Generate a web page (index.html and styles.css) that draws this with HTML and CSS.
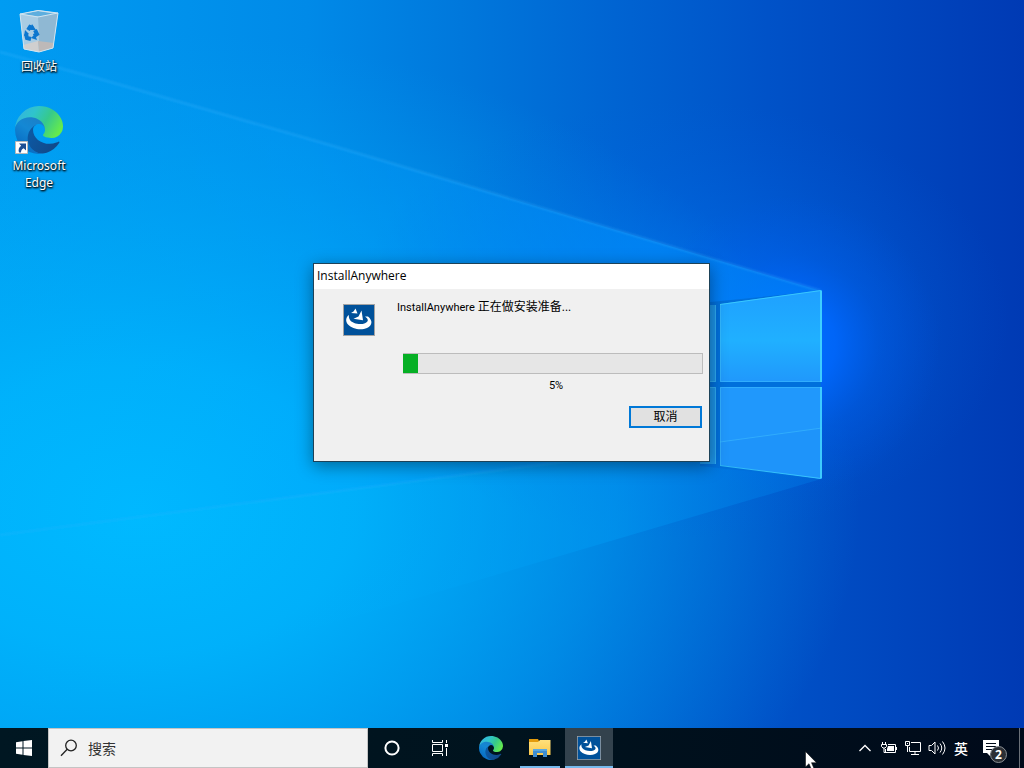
FILE: index.html
```
<!DOCTYPE html>
<html lang="zh-CN">
<head>
    <meta charset="UTF-8">
    <meta name="viewport" content="width=device-width, initial-scale=1.0">
    <title>InstallAnywhere</title>
    <link rel="stylesheet" href="styles.css">
</head>
<body>

<!-- shared icons -->
<svg class="defs" width="0" height="0" aria-hidden="true">
    <defs>
        <linearGradient id="edgeDark" x1="0.2" y1="0" x2="1" y2="0.4">
            <stop offset="0" stop-color="#0c59a4"/>
            <stop offset="1" stop-color="#114a8b"/>
        </linearGradient>
        <linearGradient id="edgeBlue" x1="0.8" y1="0.1" x2="0.3" y2="1">
            <stop offset="0" stop-color="#1b80c8"/>
            <stop offset="0.4" stop-color="#1488d4"/>
            <stop offset="1" stop-color="#0667c0"/>
        </linearGradient>
        <linearGradient id="edgeGreen" x1="0" y1="0.2" x2="1" y2="0.6">
            <stop offset="0" stop-color="#35b1e1"/>
            <stop offset="0.35" stop-color="#2fc4cc"/>
            <stop offset="0.65" stop-color="#36c98c"/>
            <stop offset="1" stop-color="#66eb4b"/>
        </linearGradient>
        <linearGradient id="folder" x1="0" y1="0" x2="0" y2="1">
            <stop offset="0" stop-color="#ffe07c"/>
            <stop offset="1" stop-color="#fbc94c"/>
        </linearGradient>
    </defs>
    <symbol id="edge" viewBox="0 0 256 256">
        <g transform="translate(-4.63 -4.92)">
            <path fill="url(#edgeDark)" d="M235.68 195.46a93.73 93.73 0 0 1-10.54 4.71 101.87 101.87 0 0 1-35.9 6.46c-47.32 0-88.54-32.55-88.54-74.32A31.48 31.48 0 0 1 117.13 105c-42.8 1.8-53.8 46.4-53.8 72.53 0 73.88 68.09 81.37 82.76 81.37 7.91 0 19.84-2.3 27-4.56l1.31-.44a128.34 128.34 0 0 0 66.6-52.8 4 4 0 0 0-5.32-5.64Z"/>
            <path fill="url(#edgeBlue)" d="M110.34 246.34A79.2 79.2 0 0 1 87.6 225a80.72 80.72 0 0 1 29.53-120c3.12-1.47 8.45-4.13 15.54-4a32.35 32.35 0 0 1 25.69 13 31.88 31.88 0 0 1 6.36 18.66c0-.21 24.46-79.6-80-79.6-43.9 0-80 41.66-80 78.21a130.15 130.15 0 0 0 12.11 56 128 128 0 0 0 156.38 67.11 75.55 75.55 0 0 1-62.78-8Z"/>
            <path fill="url(#edgeGreen)" d="M156.94 153.78c-.81 1.05-3.3 2.5-3.3 5.66 0 2.61 1.7 5.12 4.72 7.23 14.38 10 41.49 8.68 41.56 8.68a59.56 59.56 0 0 0 30.27-8.35A61.38 61.38 0 0 0 260.64 114c.26-22.41-8-37.31-11.34-43.91C228.09 28.76 182.35 4.92 132.61 4.92a128 128 0 0 0-128 126.2c.48-36.54 36.8-66.05 80-66.05 3.5 0 23.46.34 42 10.07 16.34 8.58 24.9 18.94 30.85 29.21 6.18 10.67 7.28 24.15 7.28 29.52s-2.74 13.33-7.8 19.91Z"/>
        </g>
    </symbol>
    <symbol id="installer" viewBox="0 0 32 32">
        <path fill="#a3a3a3" d="M0 0h32v32H0z"/>
        <path fill="#00519a" d="M1 1h30v30H1z"/>
        <path fill="#fff" d="M6 11C3 13 2 17 5 20.500C9 25 18 26.500 24 24C29.500 21.500 30 16.500 25 12.500L22 12.500C25.500 15 26 17.500 22 19.200C17 21.200 9.500 19.500 7 16C5.800 14 5.700 12.400 6 11z"/>
        <path fill="#fff" d="M12.500 4.500L14.500 9.500L8 9L10.500 7.500zM18.500 6.500L20 16.200L10.500 14.700L15.500 12.500z"/>
    </symbol>
</svg>

<div class="desktop">
    <svg class="wallpaper" viewBox="0 0 1024 768" preserveAspectRatio="none" aria-hidden="true">
        <defs>
            <linearGradient id="sky" x1="0" y1="0" x2="1" y2="0">
                <stop offset="0" stop-color="#009cf2"/>
                <stop offset="0.3" stop-color="#008ae8"/>
                <stop offset="0.45" stop-color="#0078dc"/>
                <stop offset="0.6" stop-color="#0064d2"/>
                <stop offset="0.75" stop-color="#0052c8"/>
                <stop offset="1" stop-color="#003ab4"/>
            </linearGradient>
            <radialGradient id="pool" gradientUnits="userSpaceOnUse" cx="0" cy="0" r="1" gradientTransform="translate(140 510) scale(720 480)">
                <stop offset="0" stop-color="#00baff"/>
                <stop offset="0.3" stop-color="#00b4fc" stop-opacity="0.9"/>
                <stop offset="0.65" stop-color="#00a8f4" stop-opacity="0.5"/>
                <stop offset="1" stop-color="#009cec" stop-opacity="0"/>
            </radialGradient>
            <radialGradient id="glow" gradientUnits="userSpaceOnUse" cx="0" cy="0" r="1" gradientTransform="translate(790 345) scale(150 150)">
                <stop offset="0" stop-color="#0070ff"/>
                <stop offset="0.3" stop-color="#0068ff" stop-opacity="0.85"/>
                <stop offset="0.6" stop-color="#0060f0" stop-opacity="0.35"/>
                <stop offset="1" stop-color="#005ae8" stop-opacity="0"/>
            </radialGradient>
            <radialGradient id="halo" gradientUnits="userSpaceOnUse" cx="0" cy="0" r="1" gradientTransform="translate(680 320) scale(330 220)">
                <stop offset="0" stop-color="#0078f8" stop-opacity="0.7"/>
                <stop offset="0.5" stop-color="#006cec" stop-opacity="0.3"/>
                <stop offset="1" stop-color="#0060e0" stop-opacity="0"/>
            </radialGradient>
            <linearGradient id="beam" gradientUnits="userSpaceOnUse" x1="0" y1="0" x2="821" y2="0">
                <stop offset="0" stop-color="#00aeff" stop-opacity="0.05"/>
                <stop offset="0.45" stop-color="#009cff" stop-opacity="0.25"/>
                <stop offset="0.8" stop-color="#0090ff" stop-opacity="0.6"/>
                <stop offset="1" stop-color="#0084f8" stop-opacity="0.6"/>
            </linearGradient>
            <linearGradient id="floor" gradientUnits="userSpaceOnUse" x1="0" y1="0" x2="821" y2="0">
                <stop offset="0" stop-color="#00b4ff" stop-opacity="0"/>
                <stop offset="0.4" stop-color="#00b0fa" stop-opacity="0.1"/>
                <stop offset="0.75" stop-color="#0096f0" stop-opacity="0.6"/>
                <stop offset="1" stop-color="#0070e0" stop-opacity="0.5"/>
            </linearGradient>
            <linearGradient id="pane" x1="0" y1="0" x2="0" y2="1">
                <stop offset="0" stop-color="#1fa0ff"/>
                <stop offset="0.55" stop-color="#20b0ff"/>
                <stop offset="1" stop-color="#2098fc"/>
            </linearGradient>
            <filter id="soft"><feGaussianBlur stdDeviation="1"/></filter>
        </defs>
        <rect width="1024" height="768" fill="url(#sky)"/>
        <rect width="1024" height="768" fill="url(#pool)"/>
        <rect width="1024" height="768" fill="url(#halo)"/>
        <rect width="1024" height="768" fill="url(#glow)"/>
        <path fill="url(#beam)" d="M0 52L100 79L330 145L821 291V428L500 470L0 535z"/>
        <path fill="url(#floor)" d="M0 535L500 470L821 428V479L370 612L100 690L0 720z"/>
        <g fill="none" stroke="#38b4ff" filter="url(#soft)">
            <path stroke-opacity="0.35" stroke-width="2" d="M0 52L100 79L330 145L821 291"/>
            <path stroke-opacity="0.25" stroke-width="2" d="M0 535L500 470L821 428"/>
        </g>
        <path fill="#0070dc" d="M700 303L821 291V479L700 466z"/>
        <path fill="url(#pane)" d="M720 304L822 290V382H720z"/>
        <path fill="#2098fc" d="M720 387H822V479L720 465z"/>
        <path fill="#1c94e8" d="M700 305H716V382H700zM700 387H716V464H700z"/>
        <path fill="#1b90f8" fill-opacity="0.5" d="M720 442L822 428V479L720 465z"/>
        <path fill="none" stroke="#48c8ff" stroke-opacity="0.45" d="M715.500 305V381.500H708M720.500 304V381.500H822M708 387.500H715.500V464M720.500 465V387.500H822M720 442L822 428"/>
        <path fill="none" stroke="#45d8ff" stroke-opacity="0.8" stroke-width="2" d="M821 291V382M821 387V478"/>
        <path fill="none" stroke="#45d8ff" stroke-opacity="0.7" d="M720 304.500L821 290.500M821 478.500L720 465.500"/>
    </svg>

    <main class="workspace">
        <nav class="shortcuts">
            <a class="shortcut" href="#">
                <svg class="shortcut-icon" viewBox="0 0 48 48" aria-hidden="true">
                    <path fill="#b9d4e6" d="M5 4L23 0L43 3L38 38L24 42L9 39z"/>
                    <path fill="#8fb8d3" d="M23 7L43 3L38 38L24 42z"/>
                    <path fill="#a9cce3" d="M5 4L23 7L24 42L9 39z"/>
                    <path fill="#5eaede" d="M7 4L23 1L41 4L23 6.500z"/>
                    <path fill="#d0cfcf" d="M8 35L23 31L24 42L9 39z"/>
                    <path fill="#bdb9b8" d="M23 31L39 33L38 38L24 42z"/>
                    <path fill="none" stroke="#cfe4f0" d="M5 4L23 .5L43 3L23 7zM5 4L9 39L24 42L38 38L43 3"/>
                    <path fill="none" stroke="#0c77cf" stroke-width="4" d="M13 20L15 17L18 18M20 20L22 24L19 26M16 29L12 28L11 24"/>
                    <path fill="#0c77cf" d="M17 14L21 20L15 20zM22 30L16 28L20 24zM9 26L10 20L14 24z"/>
                </svg>
                <span>回收站</span>
            </a>
            <a class="shortcut" href="#">
                <svg class="shortcut-icon" viewBox="0 0 48 48" aria-hidden="true">
                    <use href="#edge" width="48" height="48"/>
                    <path fill="#fff" stroke="#b8b8b8" d="M.5 35.500h12v12H.5z"/>
                    <path fill="#1c4f94" d="M4 37.500h7v7l-2.300-2.300c-2 1-2.700 2.300-2.700 4.300H4c-1-3 0-5 2.200-6.700z"/>
                </svg>
                <span>Microsoft Edge</span>
            </a>
        </nav>

        <section class="dialog" role="dialog" aria-labelledby="dialog-title">
            <h1 class="dialog-title" id="dialog-title">InstallAnywhere</h1>
            <div class="dialog-body">
                <svg class="dialog-icon" aria-hidden="true"><use href="#installer"/></svg>
                <div class="dialog-content">
                    <label class="message" for="progress"><span class="product">InstallAnywhere</span> 正在做安装准备...</label>
                    <progress class="progress" id="progress" value="5" max="100"></progress>
                    <p class="percent">5%</p>
                    <button class="cancel" type="button">取消</button>
                </div>
            </div>
        </section>
    </main>

    <footer class="taskbar">
        <button class="task start" type="button" aria-label="开始">
            <svg width="16" height="16" viewBox="0 0 16 16"><path fill="#fff" d="M0 2.200L6.500 1.300V7.500H0zM7.500 1.100L16 0V7.500H7.500zM0 8.500H6.500V14.700L0 13.800zM7.500 8.500H16V16L7.500 14.900z"/></svg>
        </button>
        <label class="search">
            <svg width="18" height="18" viewBox="0 0 18 18" fill="none" stroke="#222" stroke-width="1.300" aria-hidden="true"><circle cx="11" cy="6.500" r="5.300"/><path d="M7.200 10.300L1 16.800"/></svg>
            <input type="text" placeholder="搜索" aria-label="搜索">
        </label>
        <button class="task" type="button" aria-label="Cortana">
            <svg width="16" height="16" viewBox="0 0 16 16"><circle cx="8" cy="8" r="6.600" fill="none" stroke="#fff" stroke-width="2"/></svg>
        </button>
        <button class="task" type="button" aria-label="任务视图">
            <svg width="16" height="16" viewBox="0 0 16 16" fill="none" stroke="#fff"><path d="M.5 0V2.500H10.500V0M.5 4.500H10.500V11.500H.5zM.5 16V13.500H10.500V16M14.500 0V3M14.500 8V16"/><path fill="#fff" stroke="none" d="M13 4h3v3h-3z"/></svg>
        </button>
        <div class="apps">
            <button class="task" type="button" aria-label="Microsoft Edge">
                <svg width="24" height="24"><use href="#edge"/></svg>
            </button>
            <button class="task running" type="button" aria-label="文件资源管理器">
                <svg width="24" height="24" viewBox="0 0 24 24"><path fill="#e39b0c" d="M1 3h9l1 2v3H1z"/><path fill="url(#folder)" d="M1 6h9l2-2h10.500v15H1z"/><path fill="#3f8ed0" d="M5 13h14v8h-4v-4H9v4H5z"/><path fill="#5aa8e0" d="M5 13h14v2H5z"/></svg>
            </button>
            <button class="task running active" type="button" aria-label="InstallAnywhere">
                <svg width="24" height="24"><use href="#installer"/></svg>
            </button>
        </div>
        <div class="tray">
            <button class="tray-item" type="button" aria-label="显示隐藏的图标">
                <svg width="12" height="8" viewBox="0 0 12 8" fill="none" stroke="#fff" stroke-width="1.300"><path d="M.5 7L6 1.500L11.500 7"/></svg>
            </button>
            <button class="tray-item" type="button" aria-label="电源">
                <svg width="16" height="12" viewBox="0 0 16 12" fill="none" stroke="#fff"><path d="M1.500 0V2M4.500 0V2M.5 2.500H5.500V4.500L4 6H2L.5 4.500zM3 6V10.500H5M7 2.500H14.500V10.500H4.500V7M15.500 5V8"/><path fill="#fff" stroke="none" d="M7 4h6v5H6V7z"/></svg>
            </button>
            <button class="tray-item" type="button" aria-label="网络">
                <svg width="16" height="14" viewBox="0 0 16 14" fill="none" stroke="#fff"><path d="M6 1.500H15.500V10.500H4.500V6M10 10.500V13M6 13.500H14M.5 .5H4.500V4.500H.5zM2.500 5V11"/><path fill="#fff" stroke="none" d="M2 2h1v1H2z"/></svg>
            </button>
            <button class="tray-item" type="button" aria-label="音量">
                <svg width="18" height="14" viewBox="0 0 18 14" fill="none" stroke="#fff"><path d="M1 4.500H3.500L7 1V13L3.500 9.500H1zM9.500 4.500Q11.500 7 9.500 9.500M12 2.500Q15.500 7 12 11.500M14.500 .5Q19.500 7 14.500 13.500"/></svg>
            </button>
            <button class="tray-item language" type="button">英</button>
            <button class="tray-item notifications" type="button" aria-label="操作中心">
                <svg width="16" height="16" viewBox="0 0 16 16"><path fill="#fff" d="M0 0h16v13H7v3l-3-3H0z"/><path stroke="#000a18" d="M3 3.500h10M3 6.500h10M3 9.500h7"/></svg>
                <span class="count">2</span>
            </button>
            <button class="show-desktop" type="button" aria-label="显示桌面"></button>
        </div>
    </footer>

    <svg class="pointer" width="12" height="19" viewBox="0 0 12 19" aria-hidden="true">
        <path fill="#fff" stroke="#000" stroke-width="0.500" d="M.5 .5V16L4 12.700L6.500 18.500L9 17.500L6.500 11.700H11.500z"/>
    </svg>
</div>

</body>
</html>
```
FILE: styles.css
```
* {
    box-sizing: border-box;
}

body {
    margin: 0;
    font-family: "Open Sans", "Noto Sans CJK SC", sans-serif;
    font-size: 12px;
    background-color: #0078d7;
}

button {
    padding: 0;
    border: none;
    background: none;
    color: inherit;
    font: inherit;
}

.defs {
    position: absolute;
}

.desktop {
    position: relative;
    display: flex;
    flex-direction: column;
    height: 100vh;
    overflow: hidden;
}

.wallpaper {
    position: absolute;
    inset: 0;
    width: 100%;
    height: 100%;
}

.workspace {
    position: relative;
    flex: 1;
}

/* desktop icons */
.shortcuts {
    display: flex;
    flex-direction: column;
    gap: 31px;
    width: 78px;
    padding-top: 10px;
}

.shortcut {
    display: flex;
    flex-direction: column;
    align-items: center;
    color: #fff;
    font-family: "Noto Sans", "Noto Sans CJK SC", sans-serif;
    font-size: 12px;
    line-height: 17px;
    text-align: center;
    text-decoration: none;
    text-shadow: 0 1px 2px #000, 1px 1px 2px #000;
}

.shortcut-icon {
    width: 48px;
    height: 48px;
}

.shortcut + .shortcut .shortcut-icon {
    margin-bottom: 3px;
}

.shortcut span {
    width: 64px;
}

/* installer window */
.dialog {
    position: absolute;
    top: 263px;
    left: calc(50% - 199px);
    width: 397px;
    height: 199px;
    border: 1px solid #1d4258;
    background-color: #f0f0f0;
    color: #000;
    box-shadow: 0 4px 16px rgba(0, 0, 0, 0.4);
}

.dialog-title {
    height: 25px;
    margin: 0;
    padding-left: 3px;
    background-color: #fff;
    font-size: 12px;
    font-weight: normal;
    line-height: 23px;
}

.dialog-body {
    display: flex;
    gap: 22px;
    padding: 10px 6px 0 29px;
    font-family: Roboto, "Noto Sans CJK SC", sans-serif;
}

.dialog-icon {
    width: 32px;
    height: 32px;
    margin-top: 5px;
}

.dialog-content {
    display: flex;
    flex: 1;
    flex-direction: column;
}

.message {
    font-size: 12px;
    line-height: 16px;
}

.product {
    font-size: 11px;
}

.progress {
    appearance: none;
    width: auto;
    height: 21px;
    margin: 37px 0 0 6px;
    border: 1px solid #bcbcbc;
    border-left: none;
    background-color: #e6e6e6;
}

.progress::-webkit-progress-bar {
    background-color: #e6e6e6;
}

.progress::-webkit-progress-value {
    background-color: #06b025;
}

.percent {
    margin: 4px 0 12px;
    padding-left: 12px;
    font-size: 11px;
    line-height: 16px;
    text-align: center;
}

.cancel {
    align-self: flex-end;
    width: 73px;
    height: 22px;
    margin-right: 1px;
    border: 2px solid #0078d7;
    background-color: #e1e1e1;
    font-size: 12px;
    line-height: 18px;
}

/* taskbar */
.taskbar {
    position: relative;
    display: flex;
    height: 40px;
    background: linear-gradient(90deg, #001722, #00131e 50%, #000a1a);
    color: #fff;
}

.task {
    display: flex;
    justify-content: center;
    align-items: center;
    width: 48px;
    height: 40px;
}

.search {
    display: flex;
    align-items: center;
    flex: 0 1 320px;
    gap: 10px;
    padding-left: 11px;
    border: 1px solid #c4c4c4;
    background-color: #f2f2f2;
}

.search svg {
    flex: none;
}

.search input {
    flex: 1;
    min-width: 0;
    padding: 0;
    border: none;
    outline: none;
    background: none;
    font-family: inherit;
    font-size: 14px;
}

.search input::placeholder {
    color: #333;
    opacity: 1;
}

.apps {
    display: flex;
    gap: 1px;
    margin-left: 3px;
}

.running {
    background: linear-gradient(#76b9ed, #76b9ed) center bottom / 40px 2px no-repeat;
}

.active {
    background-color: #33424d;
    background-size: 48px 2px;
}

.tray {
    display: flex;
    margin-left: auto;
}

.tray-item {
    display: flex;
    justify-content: center;
    align-items: center;
    width: 24px;
    height: 40px;
}

.language {
    font-size: 14px;
    font-weight: 500;
}

.notifications {
    position: relative;
    width: 46px;
    padding-right: 10px;
}

.count {
    position: absolute;
    top: 18px;
    left: 17px;
    width: 17px;
    height: 17px;
    border: 1px solid #8a8f94;
    border-radius: 50%;
    background-color: #2b2f35;
    font-size: 12px;
    font-weight: bold;
    line-height: 15px;
    text-align: center;
}

.show-desktop {
    width: 5px;
    height: 40px;
    border-left: 1px solid #6a7078;
}

.pointer {
    position: absolute;
    top: 751px;
    left: 805px;
}
```
